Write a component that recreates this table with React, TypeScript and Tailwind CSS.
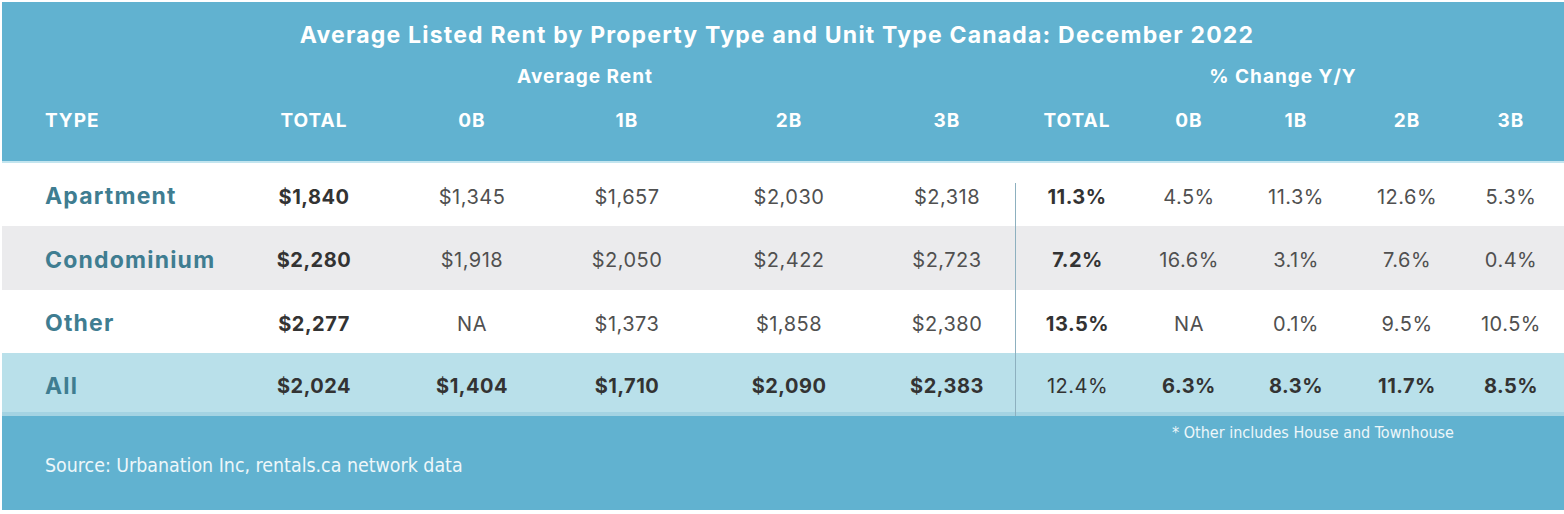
import React from 'react';

// column widths, left to right: type, 5 rent columns, 5 % change columns
const COLS = 'grid-cols-[237px_150px_166px_144px_180px_136px_124px_100px_114px_108px_100px]';

interface Row {
  name: string;
  total: string;
  rents: string[];
  totalPct: string;
  pcts: string[];
  bg: string;
  bold?: boolean;
  height: string;
  shift: string;
}

const rows: Row[] = [
  {
    name: 'Apartment',
    total: '$1,840',
    rents: ['$1,345', '$1,657', '$2,030', '$2,318'],
    totalPct: '11.3%',
    pcts: ['4.5%', '11.3%', '12.6%', '5.3%'],
    bg: 'bg-white',
    height: 'h-[63px]',
    shift: 'pt-[4px]',
  },
  {
    name: 'Condominium',
    total: '$2,280',
    rents: ['$1,918', '$2,050', '$2,422', '$2,723'],
    totalPct: '7.2%',
    pcts: ['16.6%', '3.1%', '7.6%', '0.4%'],
    bg: 'bg-[#ebebed]',
    height: 'h-[64px]',
    shift: 'pt-[4px]',
  },
  {
    name: 'Other',
    total: '$2,277',
    rents: ['NA', '$1,373', '$1,858', '$2,380'],
    totalPct: '13.5%',
    pcts: ['NA', '0.1%', '9.5%', '10.5%'],
    bg: 'bg-white',
    height: 'h-[63px]',
    shift: 'pt-[4px]',
  },
  {
    name: 'All',
    total: '$2,024',
    rents: ['$1,404', '$1,710', '$2,090', '$2,383'],
    totalPct: '12.4%',
    pcts: ['6.3%', '8.3%', '11.7%', '8.5%'],
    bg: 'bg-[#b9e0ea]',
    bold: true,
    height: 'h-[59px]',
    shift: 'pt-[7px]',
  },
];

const headers = ['TOTAL', '0B', '1B', '2B', '3B', 'TOTAL', '0B', '1B', '2B', '3B'];

export default function App() {
  return (
    <div className="w-[1564px] h-[514px] bg-white pt-[2px] pl-[2px] font-['Inter',sans-serif]">
      <div className="w-[1562px] h-[508px] bg-[#61b2d0] flex flex-col">
        {/* header */}
        <div className="h-[159px] pt-[17px] text-white font-bold">
          <div className="h-[32px] flex items-center justify-center pr-[12px] text-[23px] tracking-[1.2px]">
            Average Listed Rent by Property Type and Unit Type Canada: December 2022
          </div>
          <div className={`grid ${COLS} mt-[12px] h-[24px] items-center text-[19px] tracking-[1px]`}>
            <div className="col-start-2 col-span-5 text-center pr-[84px]">Average Rent</div>
            <div className="col-start-7 col-span-5 text-center pr-[10px]">% Change Y/Y</div>
          </div>
          <div className={`grid ${COLS} mt-[20px] h-[24px] items-center text-[19px] tracking-[1px]`}>
            <div className="pl-[43px]">TYPE</div>
            {headers.map((h, i) => (
              <div key={i} className="text-center">
                {h}
              </div>
            ))}
          </div>
        </div>
        <div className="h-[2px] bg-[#c3e5ef]" />

        {/* body */}
        {rows.map((r, ri) => (
          <div
            key={r.name}
            className={`grid ${COLS} ${r.height} items-center ${r.bg} text-[20px] tracking-[0.5px]`}
          >
            <div className={`pl-[43px] ${r.shift} text-[23px] tracking-[1.2px] font-bold text-[#3f7d91]`}>
              {r.name}
            </div>
            <div className={`text-center ${r.shift} font-bold text-[#333]`}>{r.total}</div>
            {r.rents.map((v, i) => (
              <div
                key={i}
                className={`text-center ${r.shift} ${r.bold ? 'font-bold text-[#333]' : 'text-[#505050]'}`}
              >
                {v}
              </div>
            ))}
            <div
              className={`relative self-stretch flex items-center justify-center font-bold text-[#333] ${
                ri === 0 ? '' : 'border-l border-[#8db0bf]'
              }`}
            >
              {ri === 0 && <span className="absolute left-0 top-[20px] bottom-0 w-px bg-[#8db0bf]" />}
              <span className={`${r.shift} ${r.bold ? 'font-normal' : ''}`}>{r.totalPct}</span>
            </div>
            {r.pcts.map((v, i) => (
              <div
                key={i}
                className={`text-center ${r.shift} ${r.bold ? 'font-bold text-[#333]' : 'text-[#505050]'}`}
              >
                {v}
              </div>
            ))}
          </div>
        ))}
        <div className={`grid ${COLS} h-[4px] bg-[#a4d3e2]`}>
          <div className="col-start-7 border-l border-[#8db0bf]" />
        </div>

        {/* footer */}
        <div className="flex-1 flex flex-col text-[#eef7fa] font-['DejaVu_Sans_Condensed',sans-serif]">
          <div className="h-[34px] flex items-center pl-[1170px] text-[16px]">
            * Other includes House and Townhouse
          </div>
          <div className="h-[32px] flex items-center pl-[43px] text-[19.4px]">
            Source: Urbanation Inc, rentals.ca network data
          </div>
        </div>
      </div>
    </div>
  );
}
